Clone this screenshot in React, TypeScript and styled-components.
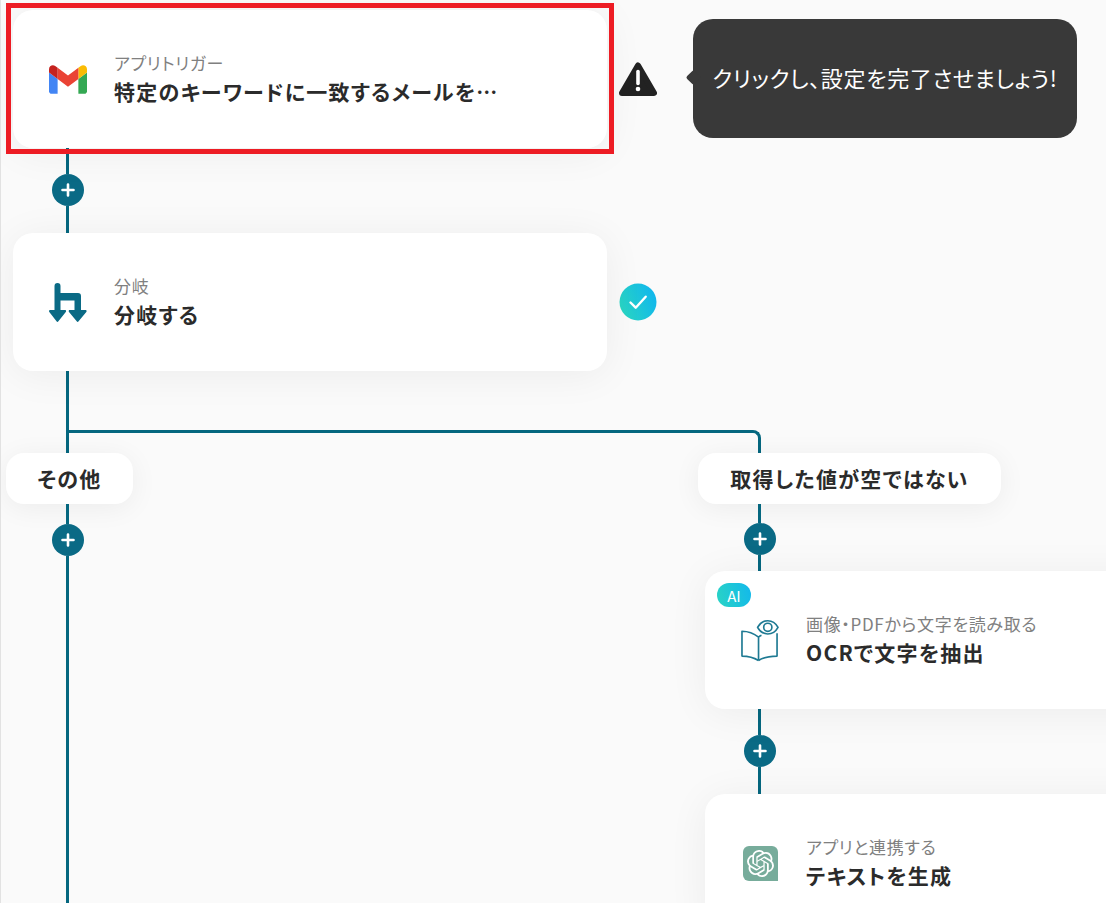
import React from "react";
import styled, { createGlobalStyle } from "styled-components";
import { SiOpenai } from "react-icons/si";

const TEAL = "#05677f";

const Global = createGlobalStyle`
  html, body { margin: 0; padding: 0; background: #fafafa; }
  body { font-family: "Noto Sans CJK JP", "Noto Sans", sans-serif; color: #2b2b2b; overflow: hidden; }
`;

const Canvas = styled.main`
  box-sizing: border-box;
  width: 1106px;
  height: 903px;
  overflow: hidden;
  background: #fafafa;
  border-left: 1px solid #e2e2e2;
  padding: 10px 0 0 12px;
  display: flex;
  flex-direction: column;
  font-feature-settings: "palt";
`;

const StepRow = styled.div`
  display: flex;
  align-items: center;
  flex: none;
`;

const CardBox = styled.section`
  position: relative;
  flex: none;
  box-sizing: border-box;
  width: 594px;
  height: 138px;
  border-radius: 20px;
  background: #fff;
  box-shadow: 0 4px 40px rgba(0, 0, 0, 0.06);
  display: flex;
  align-items: center;
  padding-left: 36px;
  gap: 27px;
`;

const SelectionFrame = styled.div`
  position: absolute;
  left: -7px;
  top: -7px;
  width: 608px;
  height: 151px;
  box-sizing: border-box;
  border: 5px solid #ed1c24;
  pointer-events: none;
`;

const IconSlot = styled.div`
  flex: none;
  width: 38px;
  display: flex;
  align-items: center;
  justify-content: center;
`;

const CardText = styled.div`
  display: flex;
  flex-direction: column;
  gap: 2px;
  margin-top: -1px;
`;

const Caption = styled.div`
  font-size: 17px;
  line-height: 22px;
  color: #808080;
  letter-spacing: 0.04em;
  white-space: nowrap;
`;

const Title = styled.div`
  font-size: 21px;
  line-height: 30px;
  font-weight: 700;
  color: #2b2b2b;
  letter-spacing: 0.06em;
  white-space: nowrap;
`;

const AiBadge = styled.span`
  position: absolute;
  left: 12px;
  top: 12px;
  width: 34px;
  height: 24px;
  border-radius: 12px;
  background: linear-gradient(75deg, #2ad4c4, #12b8ec);
  color: #fff;
  font-size: 15px;
  font-weight: 400;
  display: flex;
  align-items: center;
  justify-content: center;
`;

const StatusIcon = styled.div`
  flex: none;
  margin-left: 12px;
  width: 38px;
  height: 38px;
  display: flex;
  align-items: center;
  justify-content: center;
`;

const Tooltip = styled.div`
  position: relative;
  flex: none;
  box-sizing: border-box;
  margin: -1px 0 0 36px;
  padding-bottom: 4px;
  width: 384px;
  height: 119px;
  border-radius: 20px;
  background: #393939;
  color: #fff;
  font-size: 22px;
  letter-spacing: 0.03em;
  display: flex;
  align-items: center;
  justify-content: center;
  white-space: nowrap;
  &::before {
    content: "";
    position: absolute;
    left: -5px;
    top: 53px;
    width: 11px;
    height: 11px;
    border-radius: 2px;
    background: #393939;
    transform: rotate(45deg);
  }
`;

const Connector = styled.div<{ $x: number; $fill?: boolean }>`
  flex: ${(p) => (p.$fill ? "1" : "none")};
  width: 32px;
  margin-left: ${(p) => p.$x}px;
  display: flex;
  flex-direction: column;
  align-items: center;
`;

const Segment = styled.div<{ $h?: number }>`
  width: 3px;
  margin-right: 1px;
  background: ${TEAL};
  flex: ${(p) => (p.$h === undefined ? "1" : "none")};
  height: ${(p) => (p.$h === undefined ? "auto" : `${p.$h}px`)};
`;

const PlusButton = styled.div`
  flex: none;
  width: 32px;
  height: 32px;
  border-radius: 50%;
  background: #0a6a85;
  display: flex;
  align-items: center;
  justify-content: center;
`;

const BranchRail = styled.div`
  flex: none;
  box-sizing: border-box;
  width: 695px;
  height: 23px;
  margin-left: 53px;
  border-top: 3px solid ${TEAL};
  border-left: 3px solid ${TEAL};
  border-right: 3px solid ${TEAL};
  border-top-right-radius: 8px;
`;

const Branches = styled.div`
  flex: 1;
  min-height: 0;
  margin-left: -7px;
  display: grid;
  grid-template-columns: 692px 601px;
`;

const BranchColumn = styled.div`
  display: flex;
  flex-direction: column;
  min-height: 0;
`;

const BranchPill = styled.div<{ $w: number }>`
  flex: none;
  box-sizing: border-box;
  width: ${(p) => p.$w}px;
  height: 51px;
  padding-bottom: 2px;
  border-radius: 18px;
  background: #fff;
  box-shadow: 0 4px 28px rgba(0, 0, 0, 0.06);
  font-size: 21px;
  font-weight: 700;
  letter-spacing: 0.06em;
  display: flex;
  align-items: center;
  justify-content: center;
  white-space: nowrap;
`;

const BranchCards = styled.div`
  margin-left: 7px;
  display: flex;
  flex-direction: column;
`;

const Plus = () => (
  <svg width="14" height="14" viewBox="0 0 14 14">
    <path d="M7 1.5v11M1.5 7h11" stroke="#fff" strokeWidth="2.6" strokeLinecap="round" />
  </svg>
);

const Link = ({ x, before, after }: { x: number; before: number; after: number }) => (
  <Connector $x={x}>
    <Segment $h={before} />
    <PlusButton>
      <Plus />
    </PlusButton>
    <Segment $h={after} />
  </Connector>
);

const GmailIcon = () => (
  <svg width="38" height="29" viewBox="52 42 88 66">
    <path fill="#4285f4" d="M58 108h14V74L52 59v43c0 3.32 2.69 6 6 6" />
    <path fill="#34a853" d="M120 108h14c3.32 0 6-2.69 6-6V59l-20 15" />
    <path fill="#fbbc04" d="M120 48v26l20-15v-8c0-7.42-8.47-11.65-14.4-7.2" />
    <path fill="#ea4335" d="M72 74V48l24 18 24-18v26L96 92" />
    <path fill="#c5221f" d="M52 51v8l20 15V48l-5.6-4.2c-5.94-4.45-14.4-.22-14.4 7.2" />
  </svg>
);

const BranchIcon = () => (
  <svg width="38" height="39" viewBox="0 0 38 39" fill="#0a6a85">
    <path d="M8.500 0A3 3 0 0 1 11.500 3V10h17.500A3 3 0 0 1 32 13V27h4.500c1 0 1.500 1.100.8 1.900L29.600 38.300a1.200 1.200 0 0 1-1.900 0L20 28.900c-.7-.8-.2-1.900.8-1.900H25.500V17.500H11.500V27H16c1 0 1.500 1.100.8 1.900L9.400 38.300a1.200 1.200 0 0 1-1.900 0L.3 28.900C-.4 28.100.1 27 1.100 27H5.500V3A3 3 0 0 1 8.500 0z" />
  </svg>
);

const BookEyeIcon = () => (
  <svg width="39" height="43" viewBox="0 0 39 43" fill="none" stroke="#1f7a93" strokeWidth="1.700" strokeLinejoin="round">
    <path d="M18 42C14 39.500 8 37.500 1 37.500V12C7 12 13 14 18 18M18 18V42M18 42C22 39.500 30 37.500 37 37.500V14M18 18C19 17.200 19.800 16.700 21 16.200" />
    <path d="M17 8C19.500 3.500 23 1.200 27.500 1.200S35.500 3.500 38 8C35.500 12.500 32 14.800 27.500 14.800S19.500 12.500 17 8z" fill="#fff" />
    <circle cx="27.500" cy="8" r="4.200" />
  </svg>
);

const ChatGptBadge = styled.div`
  width: 35px;
  height: 35px;
  border-radius: 6px 6px 0 6px;
  background: #77ac9b;
  color: #fff;
  display: flex;
  align-items: center;
  justify-content: center;
  font-size: 27px;
`;

const WarningIcon = () => (
  <svg width="38" height="35" viewBox="0 0 38 35">
    <path d="M19 3.500L35 31H3z" fill="#222" stroke="#222" strokeWidth="6" strokeLinejoin="round" />
    <path d="M19 9.500v12" stroke="#fff" strokeWidth="3.600" strokeLinecap="round" />
    <circle cx="19" cy="27" r="2.300" fill="#fff" />
  </svg>
);

const CheckIcon = () => (
  <svg width="38" height="38" viewBox="0 0 38 38">
    <defs>
      <linearGradient id="okGradient" x1="0" y1="0.7" x2="1" y2="0.3">
        <stop offset="0" stopColor="#2ad6c2" />
        <stop offset="1" stopColor="#10b6ee" />
      </linearGradient>
    </defs>
    <circle cx="19" cy="19" r="18.500" fill="url(#okGradient)" />
    <path d="M11.500 19.500l5.200 5.200 10-11" fill="none" stroke="#fff" strokeWidth="2.400" strokeLinecap="round" strokeLinejoin="round" />
  </svg>
);

type CardProps = {
  icon: React.ReactNode;
  caption: string;
  title: string;
  selected?: boolean;
  ai?: boolean;
};

const Card = ({ icon, caption, title, selected, ai }: CardProps) => (
  <CardBox>
    {ai && <AiBadge>AI</AiBadge>}
    <IconSlot>{icon}</IconSlot>
    <CardText>
      <Caption>{caption}</Caption>
      <Title>{title}</Title>
    </CardText>
    {selected && <SelectionFrame />}
  </CardBox>
);

export default function App() {
  return (
    <Canvas lang="ja">
      <Global />
      <StepRow>
        <Card icon={<GmailIcon />} caption="アプリトリガー" title="特定のキーワードに一致するメールを…" selected />
        <StatusIcon>
          <WarningIcon />
        </StatusIcon>
        <Tooltip>クリックし、設定を完了させましょう!</Tooltip>
      </StepRow>
      <Link x={39} before={26} after={27} />
      <StepRow>
        <Card icon={<BranchIcon />} caption="分岐" title="分岐する" />
        <StatusIcon>
          <CheckIcon />
        </StatusIcon>
      </StepRow>
      <Connector $x={39}>
        <Segment $h={59} />
      </Connector>
      <BranchRail />
      <Branches>
        <BranchColumn>
          <BranchPill $w={127}>その他</BranchPill>
          <Connector $x={46} $fill>
            <Segment $h={20} />
            <PlusButton>
              <Plus />
            </PlusButton>
            <Segment />
          </Connector>
        </BranchColumn>
        <BranchColumn>
          <BranchPill $w={303}>取得した値が空ではない</BranchPill>
          <Link x={46} before={19} after={16} />
          <BranchCards>
            <Card
              ai
              icon={<BookEyeIcon />}
              caption="画像・PDFから文字を読み取る"
              title="OCRで文字を抽出"
            />
            <Link x={39} before={26} after={27} />
            <Card
              icon={
                <ChatGptBadge>
                  <SiOpenai />
                </ChatGptBadge>
              }
              caption="アプリと連携する"
              title="テキストを生成"
            />
          </BranchCards>
        </BranchColumn>
      </Branches>
    </Canvas>
  );
}
